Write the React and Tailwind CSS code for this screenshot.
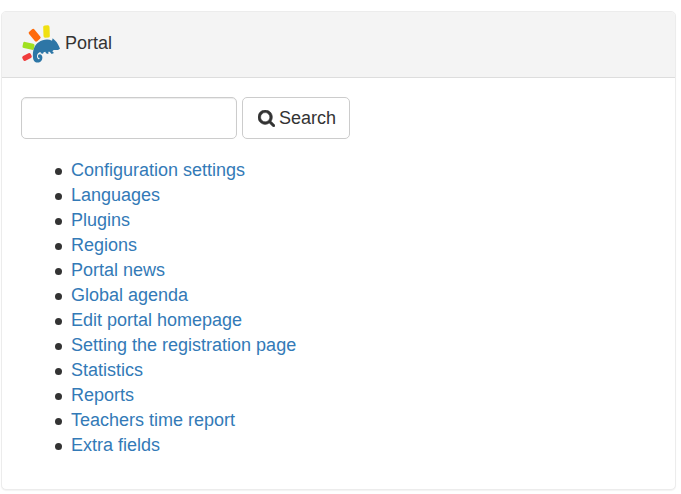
const links = [
  'Configuration settings',
  'Languages',
  'Plugins',
  'Regions',
  'Portal news',
  'Global agenda',
  'Edit portal homepage',
  'Setting the registration page',
  'Statistics',
  'Reports',
  'Teachers time report',
  'Extra fields',
];

function ChameleonIcon() {
  return (
    <svg className="h-10 w-10 shrink-0" viewBox="15 15 120 120" aria-hidden="true">
      <rect x="82" y="22" width="19" height="37" rx="5" fill="#f0e010" transform="rotate(-2 91 40)" />
      <rect x="45" y="33" width="21" height="37" rx="5" fill="#ff6a0a" transform="rotate(-40 56 51)" />
      <rect x="28" y="67" width="19" height="35" rx="5" fill="#a0e020" transform="rotate(-78 37 84)" />
      <rect x="25" y="103" width="16" height="28" rx="5" fill="#f03c3c" transform="rotate(63 33 117)" />
      <path
        fill="#2d76a6"
        d="M51 118C49 101 54 82 68 73C80 64 96 62 108 68L110 61L118 68C124 73 128 82 132 92L126 96L113 96L109 100L114 105L107 108L101 101L97 101L97 108L90 106L88 101L83 103L81 107L74 106L74 102C67 103 63 108 63 115C63 121 67 125 70 123C72 120 70 119 67 119C65 115 66 109 71 109C78 109 81 117 78 125C74 135 60 136 55 130C52 126 51 122 51 118Z"
      />
    </svg>
  );
}

function SearchIcon() {
  return (
    <svg className="h-[17px] w-[17px]" viewBox="0 128 1664 1664" fill="currentColor" stroke="currentColor" strokeWidth="50" aria-hidden="true">
      <path d="M1152 832q0-185-131.5-316.5t-316.5-131.5-316.5 131.5-131.5 316.5 131.5 316.5 316.5 131.5 316.5-131.5 131.5-316.5zm512 832q0 52-38 90t-90 38q-54 0-90-38l-343-342q-179 124-399 124-143 0-273.5-55.5t-225-150-150-225-55.5-273.5 55.5-273.5 150-225 225-150 273.5-55.5 273.5 55.5 225 150 150 225 55.5 273.5q0 220-124 399l343 343q37 37 37 90z" />
    </svg>
  );
}

export default function App() {
  return (
    <main className="bg-white pt-[11px] pr-[5px] pb-1 pl-px font-['Liberation_Sans',Arial,sans-serif] text-[18px] leading-[25px] text-[#333]">
      <section className="rounded-[5px] border border-[#ececec] bg-white shadow-[0_1px_1px_rgba(0,0,0,0.05)]">
        <header className="flex items-center gap-1 rounded-t-[4px] border-b border-[#ddd] bg-[#f4f4f4] px-[19px] pt-[11px] pb-[14px]">
          <ChameleonIcon />
          <h1>Portal</h1>
        </header>
        <div className="px-[19px] pt-[19px] pb-[31px]">
          <form className="mb-[19px] flex gap-[5px]" onSubmit={(e) => e.preventDefault()}>
            <input
              type="text"
              aria-label="Search"
              className="h-[42px] w-[216px] rounded-[5px] border border-[#ccc] bg-white px-4 shadow-[inset_0_1px_1px_rgba(0,0,0,0.075)]"
            />
            <button
              type="submit"
              className="flex h-[42px] items-center justify-center gap-1 rounded-[5px] border border-[#ccc] bg-white pr-[13px] pl-[15px]"
            >
              <SearchIcon />
              Search
            </button>
          </form>
          <ul className="pl-[34px]">
            {links.map((label) => (
              <li
                key={label}
                className="flex items-center gap-[9px] before:mt-[2px] before:size-[7px] before:rounded-full before:bg-[#333]"
              >
                <a href="#" className="text-[#337ab7] hover:underline">
                  {label}
                </a>
              </li>
            ))}
          </ul>
        </div>
      </section>
    </main>
  );
}
